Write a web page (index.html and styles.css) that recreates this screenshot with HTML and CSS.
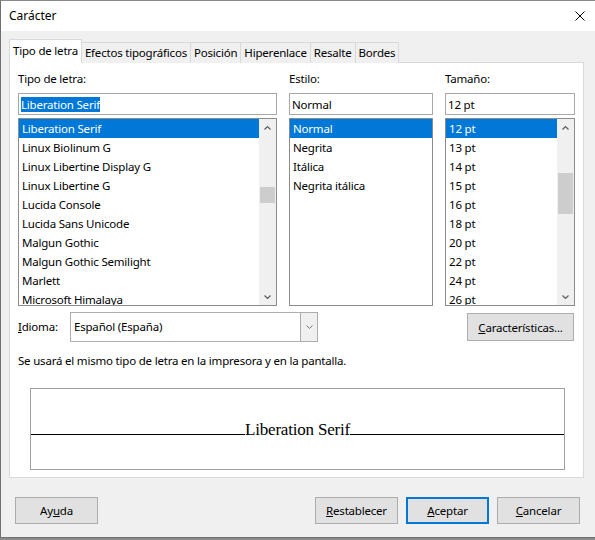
FILE: index.html
```html
<!DOCTYPE html>
<html lang="es">
<head>
<meta charset="utf-8">
<title>Carácter</title>
<link rel="stylesheet" href="styles.css">
</head>
<body>
<div class="window">
  <div class="titlebar">
    <span class="title">Carácter</span>
    <svg class="close" width="10" height="10" viewBox="0 0 10 10"><path d="M0.5 0.5 L9.5 9.5 M9.5 0.5 L0.5 9.5" stroke="#000" stroke-width="1" fill="none"/></svg>
  </div>
  <div class="dlg">
    <div class="tabs">
      <div class="tab active">Tipo de letra</div>
      <div class="tab">Efectos tipográficos</div>
      <div class="tab">Posición</div>
      <div class="tab">Hiperenlace</div>
      <div class="tab">Resalte</div>
      <div class="tab">Bordes</div>
    </div>
    <div class="panel">
      <div class="cols">
        <div class="col col-font">
          <div class="label">Tipo de letra:</div>
          <div class="input"><span class="sel">Liberation Serif</span></div>
          <div class="list">
            <div class="items">
              <div class="row selected">Liberation Serif</div>
              <div class="row">Linux Biolinum G</div>
              <div class="row">Linux Libertine Display G</div>
              <div class="row">Linux Libertine G</div>
              <div class="row">Lucida Console</div>
              <div class="row">Lucida Sans Unicode</div>
              <div class="row">Malgun Gothic</div>
              <div class="row">Malgun Gothic Semilight</div>
              <div class="row">Marlett</div>
              <div class="row">Microsoft Himalaya</div>
            </div>
            <div class="scrollbar">
              <div class="sbtn"><svg width="7" height="4" viewBox="0 0 7 4"><path d="M0.5 3.5 L3.5 0.6 L6.5 3.5" stroke="#606060" stroke-width="1.3" fill="none"/></svg></div>
              <div class="track"><div class="thumb thumb-font"></div></div>
              <div class="sbtn"><svg width="7" height="4" viewBox="0 0 7 4"><path d="M0.5 0.5 L3.5 3.4 L6.5 0.5" stroke="#606060" stroke-width="1.3" fill="none"/></svg></div>
            </div>
          </div>
        </div>
        <div class="col col-style">
          <div class="label">Estilo:</div>
          <div class="input">Normal</div>
          <div class="list">
            <div class="items">
              <div class="row selected">Normal</div>
              <div class="row">Negrita</div>
              <div class="row">Itálica</div>
              <div class="row">Negrita itálica</div>
            </div>
          </div>
        </div>
        <div class="col col-size">
          <div class="label">Tamaño:</div>
          <div class="input">12 pt</div>
          <div class="list">
            <div class="items">
              <div class="row selected">12 pt</div>
              <div class="row">13 pt</div>
              <div class="row">14 pt</div>
              <div class="row">15 pt</div>
              <div class="row">16 pt</div>
              <div class="row">18 pt</div>
              <div class="row">20 pt</div>
              <div class="row">22 pt</div>
              <div class="row">24 pt</div>
              <div class="row">26 pt</div>
            </div>
            <div class="scrollbar">
              <div class="sbtn"><svg width="7" height="4" viewBox="0 0 7 4"><path d="M0.5 3.5 L3.5 0.6 L6.5 3.5" stroke="#606060" stroke-width="1.3" fill="none"/></svg></div>
              <div class="track"><div class="thumb thumb-size"></div></div>
              <div class="sbtn"><svg width="7" height="4" viewBox="0 0 7 4"><path d="M0.5 0.5 L3.5 3.4 L6.5 0.5" stroke="#606060" stroke-width="1.3" fill="none"/></svg></div>
            </div>
          </div>
        </div>
      </div>
      <div class="lang-row">
        <span class="lang-label"><u>I</u>dioma:</span>
        <div class="combo">
          <span class="combo-text">Español (España)</span>
          <span class="combo-arrow"><svg width="7" height="4" viewBox="0 0 7 4"><path d="M0.5 0.5 L3.5 3.4 L6.5 0.5" stroke="#7a7a7a" stroke-width="1" fill="none"/></svg></span>
        </div>
        <div class="spacer"></div>
        <button class="btn btn-feat"><u>C</u>aracterísticas...</button>
      </div>
      <p class="info">Se usará el mismo tipo de letra en la impresora y en la pantalla.</p>
      <div class="preview">
        <div class="preview-row">
          <div class="pline"></div>
          <span class="ptext">Liberation Serif</span>
          <div class="pline"></div>
        </div>
      </div>
    </div>
    <div class="footer">
      <button class="btn">Ay<u>u</u>da</button>
      <div class="footer-right">
        <button class="btn"><u>R</u>establecer</button>
        <button class="btn btn-default"><u>A</u>ceptar</button>
        <button class="btn"><u>C</u>ancelar</button>
      </div>
    </div>
  </div>
</div>
</body>
</html>
```
FILE: styles.css
```css
* { box-sizing: border-box; }
html, body { margin: 0; padding: 0; }
body {
  width: 595px;
  height: 540px;
  overflow: hidden;
  background: #8a8a8a;
  font-family: "Noto Sans", "Liberation Sans", sans-serif;
  font-size: 11.5px;
  letter-spacing: -0.2px;
  color: #000;
}
.window {
  width: 595px;
  height: 538px;
  border-left: 1px solid #707070;
  border-top: 1px solid #8a8a8a;
  border-bottom: 1px solid #707070;
  background: #f0f0f0;
  display: flex;
  flex-direction: column;
}
.titlebar {
  height: 30px;
  background: #fff;
  display: flex;
  align-items: center;
  justify-content: space-between;
  padding: 0 10px 0 8px;
}
.title { line-height: 16px; font-size: 12px; letter-spacing: 0; }
.close { display: block; }
.dlg {
  flex: 1;
  padding-left: 8px;
  display: flex;
  flex-direction: column;
}
.tabs {
  margin-top: 8px;
  height: 24px;
  display: flex;
  align-items: flex-end;
  position: relative;
  z-index: 2;
}
.tab {
  height: 21px;
  border: 1px solid #d9d9d9;
  border-bottom: none;
  margin-right: -1px;
  padding: 0 3px;
  line-height: 19px;
  white-space: nowrap;
  background: #f0f0f0;
}
.tab.active {
  height: 24px;
  background: #fff;
  line-height: 22px;
}
.panel {
  width: 575px;
  height: 416px;
  margin-top: -1px;
  background: #fff;
  border: 1px solid #d9d9d9;
  padding: 8px 8px 0 8px;
  position: relative;
  z-index: 1;
}
.cols {
  display: flex;
  gap: 12px;
}
.col-font { width: 259px; }
.col-style { width: 144px; }
.col-size { width: 130px; }
.label {
  height: 16px;
  line-height: 16px;
  margin-bottom: 6px;
  white-space: nowrap;
}
.input {
  height: 22px;
  border: 1px solid #a8a8a8;
  background: #fff;
  padding: 0 2px;
  display: flex;
  align-items: center;
  white-space: nowrap;
  line-height: 15px;
}
.sel {
  background: #0078d7;
  color: #fff;
  line-height: 15px;
}
.list {
  margin-top: 3px;
  height: 188px;
  border: 1px solid #8c8c8c;
  background: #fff;
  display: flex;
  overflow: hidden;
}
.items {
  flex: 1;
  overflow: hidden;
  min-width: 0;
}
.row {
  height: 19px;
  line-height: 19px;
  padding-left: 3px;
  white-space: nowrap;
}
.row.selected {
  background: #0078d7;
  color: #fff;
}
.scrollbar {
  width: 17px;
  background: #f0f0f0;
  display: flex;
  flex-direction: column;
}
.sbtn {
  height: 17px;
  display: flex;
  align-items: center;
  justify-content: center;
}
.sbtn svg { display: block; }
.track { flex: 1; padding: 0 1px; }
.thumb { background: #cdcdcd; }
.thumb-font { margin-top: 51px; height: 16px; }
.thumb-size { margin-top: 37px; height: 41px; }
.lang-row {
  margin-top: 6px;
  display: flex;
  align-items: center;
  height: 30px;
}
.lang-label { width: 52px; line-height: 16px; }
.combo {
  width: 248px;
  height: 30px;
  border: 1px solid #adadad;
  background: #fff;
  display: flex;
  align-items: stretch;
}
.combo-text {
  flex: 1;
  padding-left: 3px;
  line-height: 28px;
  white-space: nowrap;
}
.combo-arrow {
  width: 17px;
  border-left: 1px solid #adadad;
  background: #f0f0f0;
  display: flex;
  align-items: center;
  justify-content: center;
}
.spacer { flex: 1; }
.btn {
  font-family: inherit;
  font-size: 11.5px;
  letter-spacing: -0.2px;
  color: #000;
  background: #e1e1e1;
  border: 1px solid #adadad;
  height: 27px;
  width: 83px;
  padding: 0;
  line-height: 25px;
  text-align: center;
  white-space: nowrap;
  margin: 0;
}
.btn-feat { width: 107px; height: 28px; margin-right: 1px; }
.btn-default { border: 2px solid #0078d7; line-height: 23px; }
.info {
  margin: 11px 0 0 0;
  line-height: 16px;
  white-space: nowrap;
}
.preview {
  margin: 19px 0 0 12px;
  width: 535px;
  height: 82px;
  border: 1px solid #a0a0a0;
  padding-top: 31px;
}
.preview-row {
  display: flex;
  align-items: baseline;
}
.pline {
  flex: 1;
  height: 1px;
  background: #000;
}
.ptext {
  font-family: "Liberation Serif", serif;
  font-size: 17px;
  letter-spacing: -0.2px;
  line-height: 19px;
  white-space: nowrap;
}
.footer {
  margin: 19px 15px 0 6px;
  display: flex;
  justify-content: space-between;
}
.footer-right {
  display: flex;
  gap: 8px;
}
```
